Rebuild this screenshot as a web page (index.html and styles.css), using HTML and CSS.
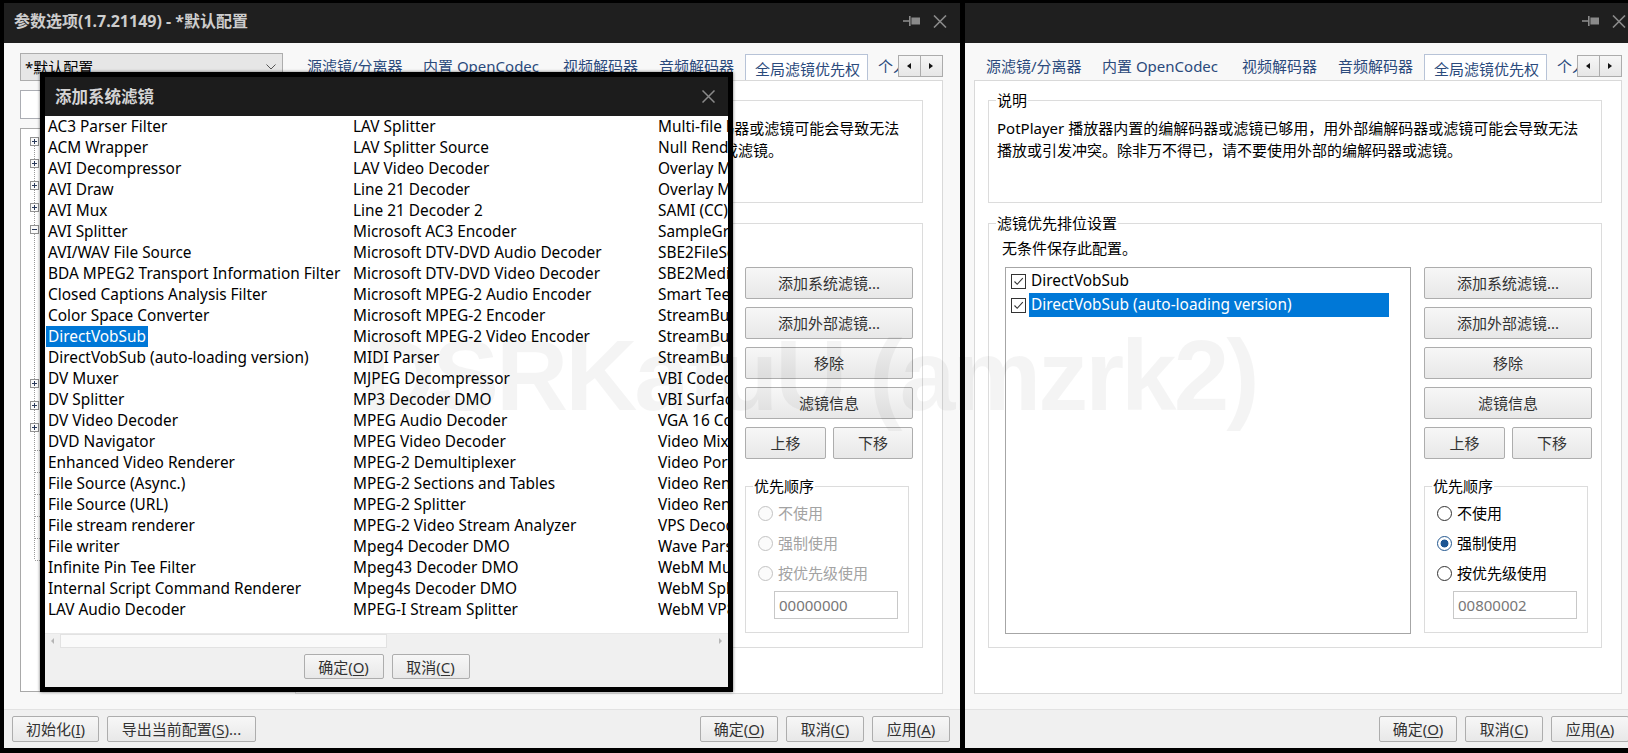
FILE: index.html
```html
<!DOCTYPE html>
<html lang="zh-CN">
<head>
<meta charset="utf-8">
<title>参数选项</title>
<link rel="stylesheet" href="styles.css">
</head>
<body>
<div class="desk">

  <!-- LEFT WINDOW -->
  <div class="win win-left">
    <div class="titlebar">
      <span class="title">参数选项(1.7.21149) - *默认配置</span>
      <span class="tb-icons">
        <svg class="pin" width="17" height="12" viewBox="0 0 17 12"><path d="M0 6H6" stroke="#8a8a8a" stroke-width="1.6"/><rect x="6" y="1" width="1.6" height="10" fill="#8a8a8a"/><rect x="8.4" y="2.5" width="8.6" height="7" fill="#8a8a8a"/></svg>
        <svg class="xic" width="14" height="13" viewBox="0 0 14 13"><path d="M1 0.5L13 12.5M13 0.5L1 12.5" stroke="#8a8a8a" stroke-width="1.6"/></svg>
      </span>
    </div>
    <div class="client">
      <div class="main">
        <div class="sidebar">
          <div class="combo"><span>*默认配置</span><svg class="chev" width="10" height="6" viewBox="0 0 10 6"><path d="M0.5 0.5L5 5L9.5 0.5" fill="none" stroke="#555" stroke-width="1"/></svg></div>
          <div class="search"></div>
          <div class="tree">
            <svg width="30" height="440" viewBox="0 0 30 440">
              <path d="M13.5 13V431" stroke="#9a9a9a" stroke-width="1" stroke-dasharray="1 1"/>
              <path d="M14 321.5H30M14 343.5H30M14 365.5H30M14 387.5H30M14 409.5H30M14 431.5H30" stroke="#9a9a9a" stroke-width="1" stroke-dasharray="1 1"/>
              <g fill="#fafafa" stroke="#919191" stroke-width="1">
                <rect x="9.5" y="8.5" width="8" height="8"/>
                <rect x="9.5" y="30.5" width="8" height="8"/>
                <rect x="9.5" y="52.5" width="8" height="8"/>
                <rect x="9.5" y="74.5" width="8" height="8"/>
                <rect x="9.5" y="96.5" width="8" height="8"/>
                <rect x="9.5" y="250.5" width="8" height="8"/>
                <rect x="9.5" y="272.5" width="8" height="8"/>
                <rect x="9.5" y="294.5" width="8" height="8"/>
              </g>
              <path d="M11 12.5H16M13.5 10V15M11 34.5H16M13.5 32V37M11 56.5H16M13.5 54V59M11 78.5H16M13.5 76V81M11 100.5H16M11 254.5H16M13.5 252V257M11 276.5H16M13.5 274V279M11 298.5H16M13.5 296V301" stroke="#2a3a5a" stroke-width="1"/>
            </svg>
          </div>
        </div>
        <div class="tabs">
          <div class="tabbar">
            <span class="tab t1">源滤镜/分离器</span>
            <span class="tab t2">内置 OpenCodec</span>
            <span class="tab t3">视频解码器</span>
            <span class="tab t4">音频解码器</span>
            <span class="tab active">全局滤镜优先权</span>
            <span class="tab t6">个人设置</span>
            <span class="tab-arrows"><span class="arr"><i class="tri-l"></i></span><span class="arr"><i class="tri-r"></i></span></span>
          </div>
          <div class="pane">
            <div class="group g-desc">
              <span class="legend">说明</span>
              <p>PotPlayer 播放器内置的编解码器或滤镜已够用，用外部编解码器或滤镜可能会导致无法</p>
              <p>播放或引发冲突。除非万不得已，请不要使用外部的编解码器或滤镜。</p>
            </div>
            <div class="group g-prio">
              <span class="legend">滤镜优先排位设置</span>
              <div class="note">无条件保存此配置。</div>
              <div class="prio-row">
                <div class="listbox"></div>
                <div class="btncol">
                  <div class="btn b32">添加系统滤镜...</div>
                  <div class="btn b32">添加外部滤镜...</div>
                  <div class="btn b32">移除</div>
                  <div class="btn b32">滤镜信息</div>
                  <div class="moverow"><div class="btn b32 up">上移</div><div class="btn b32 down">下移</div></div>
                  <div class="rgroup disabled">
                    <span class="legend">优先顺序</span>
                    <div class="radio"><i class="rc"></i><span>不使用</span></div>
                    <div class="radio"><i class="rc"></i><span>强制使用</span></div>
                    <div class="radio"><i class="rc"></i><span>按优先级使用</span></div>
                    <div class="numbox">00000000</div>
                  </div>
                </div>
              </div>
            </div>
          </div>
        </div>
      </div>
      <div class="footer">
        <div class="btn fb w87">初始化(<u>I</u>)</div>
        <div class="btn fb w149">导出当前配置(<u>S</u>)...</div>
        <div class="spacer"></div>
        <div class="btn fb w78">确定(<u>O</u>)</div>
        <div class="btn fb w78">取消(<u>C</u>)</div>
        <div class="btn fb w78">应用(<u>A</u>)</div>
      </div>
    </div>
  </div>

  <!-- ADD SYSTEM FILTER DIALOG -->
  <div class="dialog">
    <div class="dlg-title">
      <span class="dlg-name">添加系统滤镜</span>
      <svg class="dlg-x" width="13" height="13" viewBox="0 0 13 13"><path d="M0.5 0.5L12.5 12.5M12.5 0.5L0.5 12.5" stroke="#8a8a8a" stroke-width="1.5"/></svg>
    </div>
    <div class="dlg-list">
      <div class="item"><span>AC3 Parser Filter</span></div>
      <div class="item"><span>ACM Wrapper</span></div>
      <div class="item"><span>AVI Decompressor</span></div>
      <div class="item"><span>AVI Draw</span></div>
      <div class="item"><span>AVI Mux</span></div>
      <div class="item"><span>AVI Splitter</span></div>
      <div class="item"><span>AVI/WAV File Source</span></div>
      <div class="item"><span>BDA MPEG2 Transport Information Filter</span></div>
      <div class="item"><span>Closed Captions Analysis Filter</span></div>
      <div class="item"><span>Color Space Converter</span></div>
      <div class="item sel"><span>DirectVobSub</span></div>
      <div class="item"><span>DirectVobSub (auto-loading version)</span></div>
      <div class="item"><span>DV Muxer</span></div>
      <div class="item"><span>DV Splitter</span></div>
      <div class="item"><span>DV Video Decoder</span></div>
      <div class="item"><span>DVD Navigator</span></div>
      <div class="item"><span>Enhanced Video Renderer</span></div>
      <div class="item"><span>File Source (Async.)</span></div>
      <div class="item"><span>File Source (URL)</span></div>
      <div class="item"><span>File stream renderer</span></div>
      <div class="item"><span>File writer</span></div>
      <div class="item"><span>Infinite Pin Tee Filter</span></div>
      <div class="item"><span>Internal Script Command Renderer</span></div>
      <div class="item"><span>LAV Audio Decoder</span></div>

      <div class="item"><span>LAV Splitter</span></div>
      <div class="item"><span>LAV Splitter Source</span></div>
      <div class="item"><span>LAV Video Decoder</span></div>
      <div class="item"><span>Line 21 Decoder</span></div>
      <div class="item"><span>Line 21 Decoder 2</span></div>
      <div class="item"><span>Microsoft AC3 Encoder</span></div>
      <div class="item"><span>Microsoft DTV-DVD Audio Decoder</span></div>
      <div class="item"><span>Microsoft DTV-DVD Video Decoder</span></div>
      <div class="item"><span>Microsoft MPEG-2 Audio Encoder</span></div>
      <div class="item"><span>Microsoft MPEG-2 Encoder</span></div>
      <div class="item"><span>Microsoft MPEG-2 Video Encoder</span></div>
      <div class="item"><span>MIDI Parser</span></div>
      <div class="item"><span>MJPEG Decompressor</span></div>
      <div class="item"><span>MP3 Decoder DMO</span></div>
      <div class="item"><span>MPEG Audio Decoder</span></div>
      <div class="item"><span>MPEG Video Decoder</span></div>
      <div class="item"><span>MPEG-2 Demultiplexer</span></div>
      <div class="item"><span>MPEG-2 Sections and Tables</span></div>
      <div class="item"><span>MPEG-2 Splitter</span></div>
      <div class="item"><span>MPEG-2 Video Stream Analyzer</span></div>
      <div class="item"><span>Mpeg4 Decoder DMO</span></div>
      <div class="item"><span>Mpeg43 Decoder DMO</span></div>
      <div class="item"><span>Mpeg4s Decoder DMO</span></div>
      <div class="item"><span>MPEG-I Stream Splitter</span></div>

      <div class="item"><span>Multi-file Parser</span></div>
      <div class="item"><span>Null Renderer</span></div>
      <div class="item"><span>Overlay Mixer</span></div>
      <div class="item"><span>Overlay Mixer2</span></div>
      <div class="item"><span>SAMI (CC) Parser</span></div>
      <div class="item"><span>SampleGrabber</span></div>
      <div class="item"><span>SBE2FileScan</span></div>
      <div class="item"><span>SBE2MediaTypeProfile</span></div>
      <div class="item"><span>Smart Tee</span></div>
      <div class="item"><span>StreamBufferSink</span></div>
      <div class="item"><span>StreamBufferSink2</span></div>
      <div class="item"><span>StreamBufferSource</span></div>
      <div class="item"><span>VBI Codec</span></div>
      <div class="item"><span>VBI Surface Allocator</span></div>
      <div class="item"><span>VGA 16 Color Ditherer</span></div>
      <div class="item"><span>Video Mixing Renderer 9</span></div>
      <div class="item"><span>Video Port Manager</span></div>
      <div class="item"><span>Video Renderer</span></div>
      <div class="item"><span>Video Renderer</span></div>
      <div class="item"><span>VPS Decoder</span></div>
      <div class="item"><span>Wave Parser</span></div>
      <div class="item"><span>WebM Muxer</span></div>
      <div class="item"><span>WebM Splitter</span></div>
      <div class="item"><span>WebM VP8 Decoder</span></div>
    </div>
    <div class="hscroll">
      <span class="sb-arrow"><i class="stri-l"></i></span>
      <span class="sb-thumb"></span>
      <span class="sb-track"></span>
      <span class="sb-arrow"><i class="stri-r"></i></span>
    </div>
    <div class="dlg-btns">
      <div class="btn db w80">确定(<u>O</u>)</div>
      <div class="btn db w78">取消(<u>C</u>)</div>
    </div>
  </div>

  <!-- RIGHT WINDOW (cropped view) -->
  <div class="rview">
    <div class="win">
      <div class="titlebar">
        <span class="title">参数选项(1.7.21149) - *默认配置</span>
        <span class="tb-icons">
          <svg class="pin" width="17" height="12" viewBox="0 0 17 12"><path d="M0 6H6" stroke="#8a8a8a" stroke-width="1.6"/><rect x="6" y="1" width="1.6" height="10" fill="#8a8a8a"/><rect x="8.4" y="2.5" width="8.6" height="7" fill="#8a8a8a"/></svg>
          <svg class="xic" width="14" height="13" viewBox="0 0 14 13"><path d="M1 0.5L13 12.5M13 0.5L1 12.5" stroke="#8a8a8a" stroke-width="1.6"/></svg>
        </span>
      </div>
      <div class="client">
        <div class="main">
          <div class="sidebar">
            <div class="combo"><span>*默认配置</span></div>
            <div class="search"></div>
            <div class="tree"></div>
          </div>
          <div class="tabs">
            <div class="tabbar">
              <span class="tab t1">源滤镜/分离器</span>
              <span class="tab t2">内置 OpenCodec</span>
              <span class="tab t3">视频解码器</span>
              <span class="tab t4">音频解码器</span>
              <span class="tab active">全局滤镜优先权</span>
              <span class="tab t6">个人设置</span>
              <span class="tab-arrows"><span class="arr"><i class="tri-l"></i></span><span class="arr"><i class="tri-r"></i></span></span>
            </div>
            <div class="pane">
              <div class="group g-desc">
                <span class="legend">说明</span>
                <p>PotPlayer 播放器内置的编解码器或滤镜已够用，用外部编解码器或滤镜可能会导致无法</p>
                <p>播放或引发冲突。除非万不得已，请不要使用外部的编解码器或滤镜。</p>
              </div>
              <div class="group g-prio">
                <span class="legend">滤镜优先排位设置</span>
                <div class="note">无条件保存此配置。</div>
                <div class="prio-row">
                  <div class="listbox">
                    <div class="lrow"><i class="chk"><svg width="13" height="13" viewBox="0 0 13 13"><path d="M2.5 6.5L5.2 9.3L10.8 3.2" fill="none" stroke="#333" stroke-width="1.1"/></svg></i><span class="txt">DirectVobSub</span></div>
                    <div class="lrow sel"><i class="chk"><svg width="13" height="13" viewBox="0 0 13 13"><path d="M2.5 6.5L5.2 9.3L10.8 3.2" fill="none" stroke="#333" stroke-width="1.1"/></svg></i><span class="txt">DirectVobSub (auto-loading version)</span></div>
                  </div>
                  <div class="btncol">
                    <div class="btn b32">添加系统滤镜...</div>
                    <div class="btn b32">添加外部滤镜...</div>
                    <div class="btn b32">移除</div>
                    <div class="btn b32">滤镜信息</div>
                    <div class="moverow"><div class="btn b32 up">上移</div><div class="btn b32 down">下移</div></div>
                    <div class="rgroup">
                      <span class="legend">优先顺序</span>
                      <div class="radio"><i class="rc"></i><span>不使用</span></div>
                      <div class="radio"><i class="rc on"></i><span>强制使用</span></div>
                      <div class="radio"><i class="rc"></i><span>按优先级使用</span></div>
                      <div class="numbox">00800002</div>
                    </div>
                  </div>
                </div>
              </div>
            </div>
          </div>
        </div>
        <div class="footer">
          <div class="btn fb w87">初始化(<u>I</u>)</div>
          <div class="btn fb w149">导出当前配置(<u>S</u>)...</div>
          <div class="spacer"></div>
          <div class="btn fb w78">确定(<u>O</u>)</div>
          <div class="btn fb w78">取消(<u>C</u>)</div>
          <div class="btn fb w78">应用(<u>A</u>)</div>
        </div>
      </div>
    </div>
  </div>

  <div class="wm">DSRKafuU (amzrk2)</div>
</div>
</body>
</html>
```

FILE: styles.css
```css
* { box-sizing: border-box; }
html, body { margin: 0; padding: 0; }
body {
  background: #000;
  width: 1628px;
  height: 753px;
  overflow: hidden;
  font-family: "Noto Sans", "Noto Sans CJK SC", sans-serif;
  font-size: 15px;
  color: #000;
}
.desk { position: relative; width: 1628px; height: 753px; }

/* windows */
.win {
  position: absolute;
  top: 3px;
  width: 956px;
  height: 745px;
  display: flex;
  flex-direction: column;
  background: #f8f8f8;
}
.win-left { left: 4px; }
.rview {
  position: absolute;
  left: 965px;
  top: 0;
  width: 663px;
  height: 753px;
  overflow: hidden;
}
.rview .win { left: -282px; }

.titlebar {
  flex: none;
  height: 40px;
  background: #1f1f1f;
  display: flex;
  align-items: flex-start;
  padding: 8px 13px 0 10px;
}
.title {
  color: #cdcdcd;
  font-weight: 700;
  font-size: 16px;
  line-height: 20px;
  white-space: nowrap;
}
.tb-icons {
  margin-left: auto;
  display: flex;
  align-items: center;
  gap: 13px;
  height: 20px;
}
.pin, .xic { display: block; }

.client {
  flex: 1;
  display: flex;
  flex-direction: column;
  background: #f8f8f8;
}
.main {
  display: flex;
  height: 651px;
  padding: 10px 0 0 16px;
}

/* sidebar */
.sidebar { width: 263px; display: flex; flex-direction: column; }
.combo {
  height: 28px;
  background: #e6e6e6;
  border: 1px solid #adadad;
  display: flex;
  align-items: center;
  justify-content: space-between;
  padding: 0 6px 0 4px;
  line-height: 20px;
}
.chev { display: block; }
.search {
  height: 29px;
  margin-top: 9px;
  background: #fff;
  border: 1px solid #abadb3;
}
.tree {
  height: 564px;
  margin-top: 9px;
  background: #fff;
  border: 1px solid #a9a9a9;
}
.tree svg { display: block; }

/* tabs */
.tabs { width: 648px; margin-left: 12px; margin-top: 1px; display: flex; flex-direction: column; }
.tabbar {
  position: relative;
  height: 26px;
  display: flex;
  padding-left: 2px;
  overflow: hidden;
  z-index: 1;
}
.tab {
  flex: none;
  height: 26px;
  padding: 2px 0 0 10px;
  line-height: 20px;
  color: #2b4a7c;
  white-space: nowrap;
}
.t1 { width: 116px; }
.t2 { width: 140px; }
.t3 { width: 96px; }
.t4 { width: 96px; }
.t6 { width: 80px; }
.tab.active {
  width: 123px;
  height: 27px;
  padding: 3px 0 0 9px;
  border: 1px solid #b7c3d7;
  border-bottom: none;
  background: #fff;
  line-height: 22px;
}
.tab-arrows {
  position: absolute;
  right: 0;
  top: 1px;
  display: flex;
  background: #f8f8f8;
}
.arr {
  width: 22.5px;
  height: 22px;
  border: 1px solid #acacac;
  background: linear-gradient(#f6f6f6, #e6e6e6);
  display: flex;
  align-items: center;
  justify-content: center;
}
.arr + .arr { border-left: none; }
.tri-l, .tri-r { display: block; width: 0; height: 0; border-top: 3.5px solid transparent; border-bottom: 3.5px solid transparent; }
.tri-l { border-right: 4px solid #111; }
.tri-r { border-left: 4px solid #111; }

.pane {
  height: 614px;
  border: 1px solid #d9d9d9;
  background: #fff;
  padding: 19px 0 0 13px;
}
.group { position: relative; border: 1px solid #dcdcdc; background: #fff; }
.legend {
  position: absolute;
  left: 7px;
  top: -11px;
  padding: 0 1px;
  background: #fff;
  line-height: 20px;
  white-space: nowrap;
}
.g-desc { width: 614px; height: 103px; padding: 16px 0 0 8px; }
.g-desc p { margin: 0; line-height: 22px; white-space: nowrap; }
.g-prio { width: 614px; height: 425px; margin-top: 20px; padding: 14px 0 0 13px; }
.note { line-height: 20px; }
.prio-row { display: flex; margin-top: 9px; margin-left: 3px; }

.listbox {
  width: 406px;
  height: 367px;
  border: 1px solid #a6a6a6;
  background: #fff;
  padding-top: 1px;
}
.lrow { height: 24px; display: flex; align-items: center; padding-left: 5px; }
.chk {
  display: block;
  width: 15px;
  height: 15px;
  border: 1px solid #333;
  background: #fff;
}
.chk svg { display: block; }
.lrow .txt {
  margin-left: 3px;
  padding-left: 2px;
  width: 360px;
  line-height: 24px;
  font-size: 15.4px;
  white-space: nowrap;
}
.lrow.sel .txt { background: #0078d7; color: #fff; }

.btncol { width: 168px; margin-left: 13px; display: flex; flex-direction: column; gap: 8px; }
.btn {
  display: flex;
  align-items: center;
  justify-content: center;
  border: 1px solid #adadad;
  border-radius: 2px;
  background: linear-gradient(#f7f7f7, #e8e8e8);
  color: #333;
  line-height: 20px;
  white-space: nowrap;
}
.btn u { text-decoration-thickness: 1px; text-underline-offset: 2px; }
.b32 { height: 32px; }
.moverow { display: flex; gap: 7px; }
.up { width: 81px; }
.down { width: 80px; }

.rgroup {
  position: relative;
  width: 164px;
  height: 147px;
  margin-top: 19px;
  border: 1px solid #dcdcdc;
  padding: 11px 0 0 12px;
}
.radio { height: 30px; display: flex; align-items: center; gap: 5px; line-height: 20px; }
.rc {
  display: block;
  width: 15px;
  height: 15px;
  border-radius: 50%;
  border: 1px solid #333;
  background: #fff;
}
.rc.on {
  border-color: #24588f;
  background: radial-gradient(circle, #1c5593 0 3.6px, #fff 4.3px);
}
.rgroup.disabled .rc { border-color: #c2c2c2; background: #fbfbfb; }
.rgroup.disabled .radio span { color: #a3a3a3; }
.numbox {
  width: 124px;
  height: 28px;
  margin: 3px 0 0 16px;
  border: 1px solid #c8c8c8;
  background: #fff;
  color: #777;
  padding-left: 4px;
  line-height: 26px;
}

/* footer */
.footer {
  flex: 1;
  margin-top: 15px;
  border-top: 1px solid #e2e2e2;
  background: #f0f0f0;
  display: flex;
  gap: 8px;
  padding: 6px 10px 0 8px;
}
.fb { height: 26px; }
.w87 { width: 87px; }
.w149 { width: 149px; }
.w78 { width: 78px; }
.w80 { width: 80px; }
.spacer { flex: 1; }

/* dialog */
.dialog {
  position: absolute;
  left: 40px;
  top: 72px;
  width: 693px;
  height: 620px;
  border: 5px solid #000;
  box-shadow: 0 0 3px rgba(0, 0, 0, 0.55);
  background: #fff;
  display: flex;
  flex-direction: column;
  z-index: 5;
}
.dlg-title {
  flex: none;
  height: 39px;
  background: #1c1c1c;
  display: flex;
  align-items: center;
  padding: 0 13px 0 10px;
}
.dlg-name { color: #d4d4d4; font-weight: 700; font-size: 16.5px; line-height: 22px; }
.dlg-x { margin-left: auto; display: block; }
.dlg-list {
  flex: none;
  height: 517px;
  overflow: hidden;
  display: grid;
  grid-template-rows: repeat(24, 21px);
  grid-auto-flow: column;
  grid-auto-columns: 305px;
  align-content: start;
  padding-left: 1px;
  font-size: 15.4px;
}
.item { line-height: 21px; white-space: nowrap; }
.item span { display: inline-block; padding: 0 2px; height: 21px; }
.item.sel span { background: #0078d7; color: #fff; }

.hscroll { flex: none; height: 15px; display: flex; background: #f0f0f0; border-top: 1px solid #e8e8e8; }
.sb-arrow { width: 15px; display: flex; align-items: center; justify-content: center; }
.stri-l, .stri-r { display: block; width: 0; height: 0; border-top: 3.5px solid transparent; border-bottom: 3.5px solid transparent; }
.stri-l { border-right: 3.5px solid #b5b5b5; }
.stri-r { border-left: 3.5px solid #b5b5b5; }
.sb-thumb { width: 327px; background: #fafafa; border: 1px solid #e2e2e2; }
.sb-track { flex: 1; }

.dlg-btns {
  flex: 1;
  background: #f0f0f0;
  display: flex;
  justify-content: center;
  gap: 8px;
  padding-top: 6px;
}
.db { height: 25px; }

/* watermark */
.wm {
  position: absolute;
  left: 363px;
  top: 325px;
  font-family: "Liberation Sans", sans-serif;
  font-weight: 700;
  font-size: 100px;
  line-height: 1;
  letter-spacing: -3px;
  color: rgba(0, 0, 0, 0.045);
  white-space: nowrap;
  pointer-events: none;
  z-index: 10;
}
```
